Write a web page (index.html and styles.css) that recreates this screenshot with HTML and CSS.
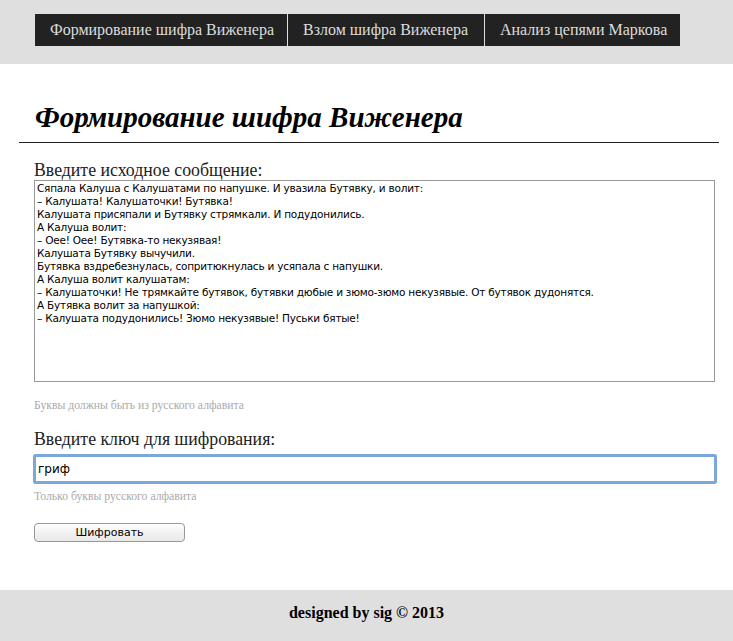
FILE: index.html
```html
<!DOCTYPE html>
<html lang="ru">
<head>
<meta charset="utf-8">
<title>Формирование шифра Виженера</title>
<link rel="stylesheet" href="styles.css">
</head>
<body>
<header class="top">
  <nav class="nav">
    <a class="nav-item" href="#">Формирование шифра Виженера</a>
    <a class="nav-item" href="#">Взлом шифра Виженера</a>
    <a class="nav-item" href="#">Анализ цепями Маркова</a>
  </nav>
</header>
<main class="main">
  <h1 class="title">Формирование шифра Виженера</h1>
  <form class="form">
    <label class="label">Введите исходное сообщение:</label>
    <textarea class="message">Сяпала Калуша с Калушатами по напушке. И увазила Бутявку, и волит:
– Калушата! Калушаточки! Бутявка!
Калушата присяпали и Бутявку стрямкали. И подудонились.
А Калуша волит:
– Оее! Оее! Бутявка-то некузявая!
Калушата Бутявку вычучили.
Бутявка вздребезнулась, сопритюкнулась и усяпала с напушки.
А Калуша волит калушатам:
– Калушаточки! Не трямкайте бутявок, бутявки дюбые и зюмо-зюмо некузявые. От бутявок дудонятся.
А Бутявка волит за напушкой:
– Калушата подудонились! Зюмо некузявые! Пуськи бятые!</textarea>
    <p class="hint hint-first">Буквы должны быть из русского алфавита</p>
    <label class="label label-key">Введите ключ для шифрования:</label>
    <input class="key" type="text" value="гриф">
    <p class="hint">Только буквы русского алфавита</p>
    <button class="btn" type="button">Шифровать</button>
  </form>
</main>
<footer class="footer">designed by sig © 2013</footer>
</body>
</html>
```
FILE: styles.css
```css
html, body {
  margin: 0;
  padding: 0;
  background: #fff;
  font-family: "Liberation Serif", "DejaVu Serif", serif;
  color: #111;
}
.top {
  background: #dfdfdf;
  height: 64px;
  box-sizing: border-box;
  padding: 14px 0 0 35px;
}
.nav {
  display: flex;
  gap: 1px;
}
.nav-item {
  display: block;
  background: #222;
  color: #ddd;
  text-decoration: none;
  font-size: 16px;
  height: 32px;
  line-height: 32px;
  padding: 0 15px;
  white-space: nowrap;
}
.nav-item:nth-child(1) { width: 222px; }
.nav-item:nth-child(2) { width: 166px; }
.nav-item:nth-child(3) { width: 165px; }
.main {
  width: 700px;
  margin-left: 19px;
}
.title {
  margin: 0;
  padding: 36px 0 8px 16px;
  font-size: 29px;
  font-style: italic;
  font-weight: bold;
  line-height: 34px;
  color: #000;
  border-bottom: 1px solid #222;
}
.form {
  display: flex;
  flex-direction: column;
  align-items: flex-start;
  padding: 17px 0 0 15px;
}
.label {
  font-size: 17.8px;
  line-height: 20px;
  color: #222;
}
.message {
  box-sizing: border-box;
  margin: 0;
  width: 681px;
  height: 202px;
  border: 1px solid #999;
  padding: 1px 2px 0;
  font-family: "DejaVu Sans", sans-serif;
  font-size: 10.5px;
  letter-spacing: -0.22px;
  line-height: 13px;
  color: #000;
  resize: none;
  overflow: hidden;
}
.hint {
  margin: 0;
  font-size: 11.7px;
  color: #aaa;
  line-height: 14px;
}
.hint-first { margin-top: 17px; }
.label-key { margin-top: 16px; }
.key {
  box-sizing: border-box;
  margin: 5px 0 6px -1px;
  width: 684px;
  height: 30px;
  border: 1px solid #8aaed8;
  outline: 3px solid #7aa7dc;
  outline-offset: -3px;
  border-radius: 3px;
  padding: 0 4px;
  font-family: "DejaVu Sans", sans-serif;
  font-size: 12px;
  color: #000;
}
.btn {
  margin-top: 19px;
  width: 151px;
  height: 19px;
  padding: 0;
  border: 1px solid #999;
  border-radius: 4px;
  background: linear-gradient(#fdfdfd, #e8e8e8);
  font-family: "DejaVu Sans", sans-serif;
  font-size: 11px;
  color: #000;
}
.footer {
  margin-top: 48px;
  background: #dfdfdf;
  height: 51px;
  line-height: 46px;
  text-align: center;
  font-weight: bold;
  font-size: 16px;
  color: #000;
}
```
